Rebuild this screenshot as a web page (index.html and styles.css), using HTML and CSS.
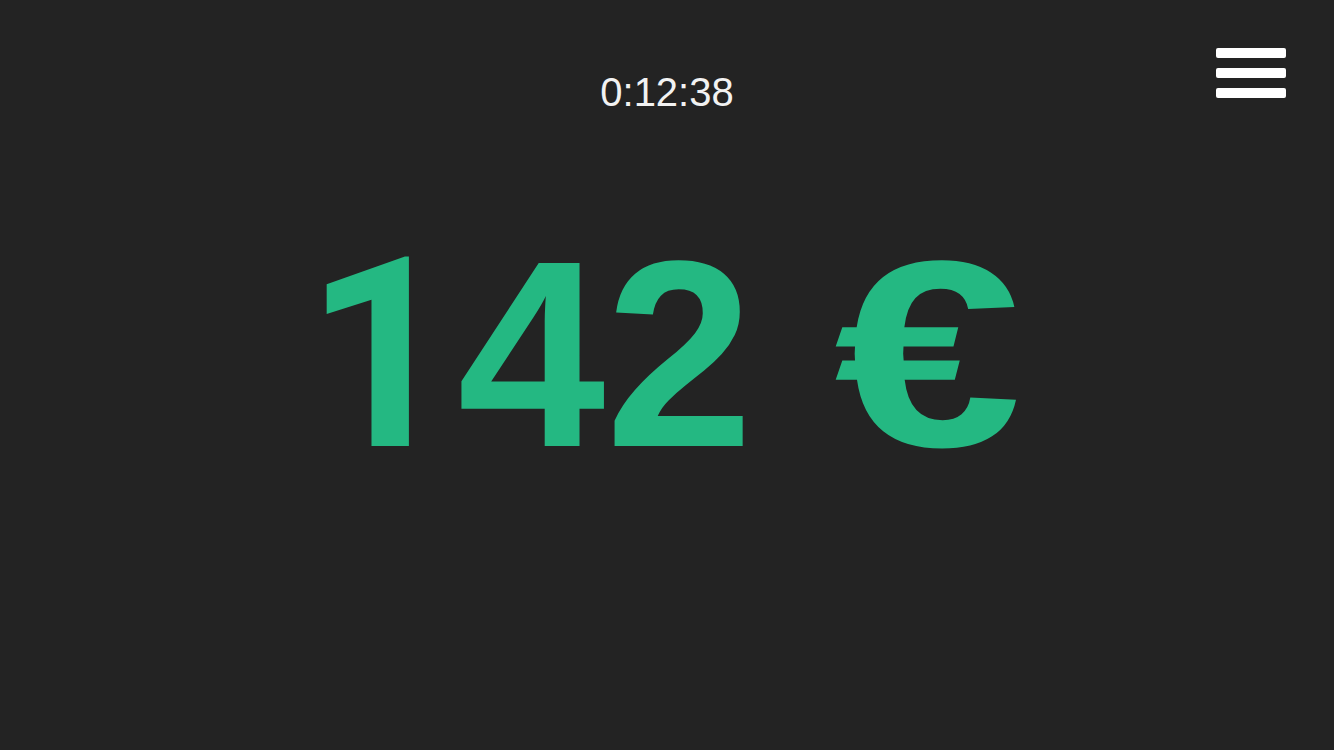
FILE: index.html
```html
<!DOCTYPE html>
<html lang="de">
<head>
<meta charset="utf-8">
<title>Timer</title>
<link rel="stylesheet" href="styles.css">
</head>
<body>
<div class="screen">
  <header class="top">
    <span class="spacer"></span>
    <div class="timer">0:12:38</div>
    <button class="menu" aria-label="Menü">
      <span class="bar"></span>
      <span class="bar"></span>
      <span class="bar"></span>
    </button>
  </header>
  <main class="amount"><span class="one">1</span>42 <span class="currency">€</span></main>
</div>
</body>
</html>
```
FILE: styles.css
```css
html, body {
  margin: 0;
  padding: 0;
  background: #232323;
}
.screen {
  width: 1334px;
  height: 750px;
  display: flex;
  flex-direction: column;
  font-family: "Liberation Sans", Arial, sans-serif;
}
.top {
  display: grid;
  grid-template-columns: 1fr auto 1fr;
  align-items: start;
  padding: 48px 48px 0 48px;
}
.timer {
  margin-top: 21px;
  font-size: 40px;
  line-height: 46px;
  color: #f2f2f2;
}
.menu {
  justify-self: end;
  display: flex;
  flex-direction: column;
  gap: 10px;
  padding: 0;
  border: 0;
  background: none;
}
.bar {
  display: block;
  width: 70px;
  height: 10px;
  border-radius: 2px;
  background: #ffffff;
}
.amount {
  margin-top: 106px;
  text-align: center;
  font-family: "Liberation Sans", Arial, sans-serif;
  font-weight: 700;
  font-size: 266px;
  line-height: 266px;
  color: #24b882;
}
.one {
  font-family: Roboto, "Liberation Sans", sans-serif;
}
.currency {
  display: inline-block;
  width: 202px;
  text-align: center;
  transform: scaleX(1.27);
}
```
